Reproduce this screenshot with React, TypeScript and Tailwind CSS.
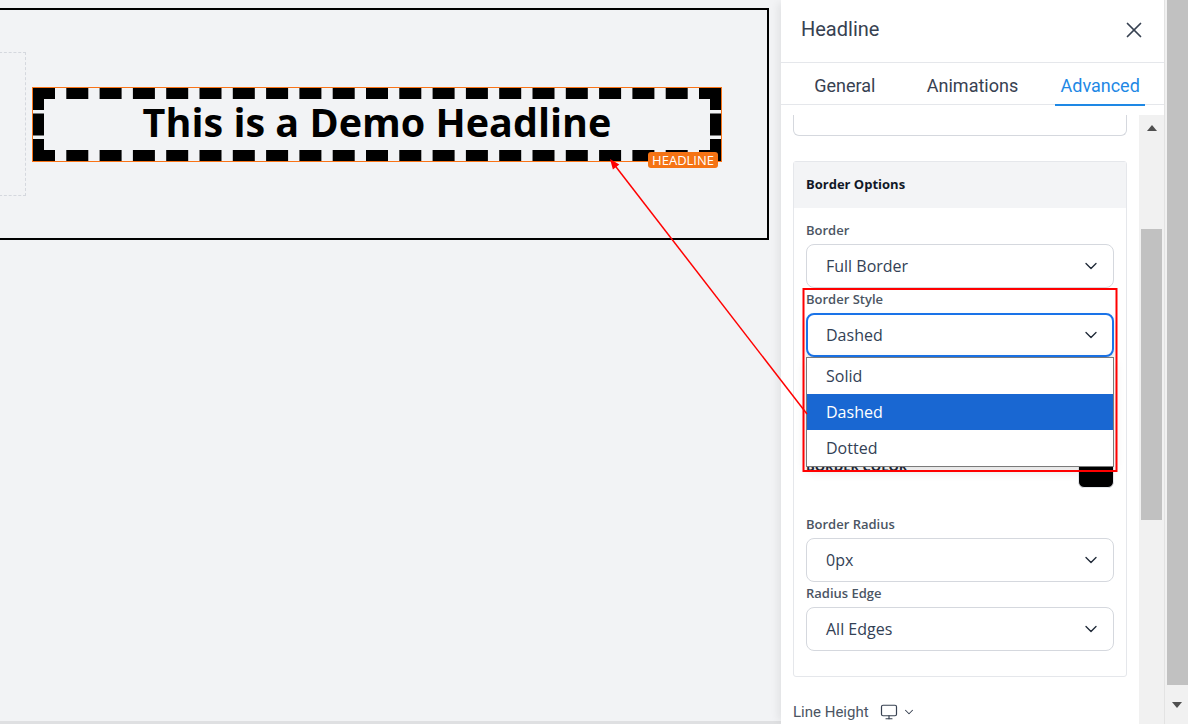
import React from 'react';
import { X, ChevronDown, Monitor } from 'lucide-react';

const Select: React.FC<{ value: string; focused?: boolean }> = ({ value, focused }) => (
  <div
    className={
      focused
        ? 'flex h-11 items-center justify-between rounded-lg border-2 border-[#1a73e8] bg-white pl-[18px] pr-[11px] text-[16px] text-[#334155] shadow-[0_4px_6px_rgba(0,0,0,0.12)]'
        : 'flex h-11 items-center justify-between rounded-lg border border-[#d5d8de] bg-white pl-[19px] pr-3 text-[16px] text-[#334155]'
    }
  >
    <span>{value}</span>
    <ChevronDown size={20} strokeWidth={1.6} className="text-[#1f2937]" />
  </div>
);

const Label: React.FC<{ children: React.ReactNode }> = ({ children }) => (
  <div className="mb-1 text-[13px] font-semibold leading-5 text-[#4b5563]">{children}</div>
);

const App: React.FC = () => {
  return (
    <div className="relative flex h-[724px] w-[1188px] overflow-hidden bg-white font-['Open_Sans',sans-serif]">
      {/* Canvas */}
      <main className="flex w-[781px] shrink-0 flex-col bg-[#f2f3f5]">
        <div className="pt-2">
          <div className="-ml-[2px] flex h-[232px] w-[771px] items-center border-2 border-black">
            <div className="-ml-[20px] h-[144px] w-[46px] shrink-0 border border-dashed border-[#d5d8de]"></div>
            <div className="relative ml-[6px] h-[75px] w-[690px] shrink-0 border border-[#f97316]">
              <div className="flex h-full items-center justify-center border-[11px] border-dashed border-black">
                <h1 className="mb-[3px] text-[39.5px] font-bold leading-none text-black">This is a Demo Headline</h1>
              </div>
              <span className="absolute bottom-[-7px] right-[3px] rounded-[3px] bg-[#f57314] px-[4px] text-[13px] leading-4 text-white">
                HEADLINE
              </span>
            </div>
          </div>
        </div>
        <div className="mt-auto h-[3px] bg-[#dfe0e2]"></div>
      </main>

      {/* Settings panel */}
      <aside className="relative z-10 flex w-[384px] shrink-0 flex-col border-r border-[#e3e3e3] bg-white shadow-[-6px_0_8px_-3px_rgba(0,0,0,0.07)]">
        <div className="flex h-[63px] items-center justify-between border-b border-[#e5e7eb] pb-[5px] pl-5 pr-[17px]">
          <span className="font-['Roboto',sans-serif] text-[20px] text-[#374151]">Headline</span>
          <X size={26} strokeWidth={1.6} className="mt-[2px] text-[#374151]" />
        </div>
        <div className="grid h-[42px] grid-cols-3 border-b border-[#e5e7eb] font-['Roboto',sans-serif] text-[18px]">
          <div className="flex items-center justify-center pt-[4px] text-[#374151]">General</div>
          <div className="flex items-center justify-center pt-[4px] text-[#374151]">Animations</div>
          <div className="flex items-center justify-center">
            <span className="relative flex h-full items-center px-[5px] pt-[4px] text-[#1e88e5]">
              Advanced
              <span className="absolute bottom-[-2px] left-0 right-0 h-[2px] bg-[#1e88e5]"></span>
            </span>
          </div>
        </div>

        <div className="flex min-h-0 flex-1 pt-[10px]">
          <div className="w-[358px] shrink-0 px-3">
            <div className="h-[21px] rounded-b-md border border-t-0 border-[#d5d8de]"></div>

            <div className="mt-[25px] rounded-[3px] border border-[#e5e7eb]">
              <div className="flex h-[46px] items-center bg-[#f3f4f6] px-3 text-[13px] font-bold text-[#111827]">
                Border Options
              </div>
              <div className="px-3 pb-[25px] pt-3">
                <Label>Border</Label>
                <Select value="Full Border" />

                <div className="relative mt-px">
                  <Label>Border Style</Label>
                  <Select value="Dashed" focused />
                  <div className="absolute left-0 right-0 top-full z-20 border border-[#7a7a7a] bg-white text-[16px] shadow-[0_4px_10px_rgba(0,0,0,0.12)]">
                    <div className="flex h-9 items-center pl-[19px] text-[#334155]">Solid</div>
                    <div className="flex h-9 items-center bg-[#1967d2] pl-[19px] text-white">Dashed</div>
                    <div className="flex h-9 items-center pl-[19px] text-[#334155]">Dotted</div>
                  </div>
                </div>

                {/* field hidden under the open list */}
                <div className="mt-px h-[68px]"></div>

                <div className="mt-[26px] flex h-9 justify-between">
                  <span className="mt-1 text-[13px] font-bold uppercase leading-5 text-[#1f2937]">Border Color</span>
                  <div className="h-9 w-9 rounded-md border border-[#e5e7eb] bg-black"></div>
                </div>

                <div className="mt-[26px]">
                  <Label>Border Radius</Label>
                  <Select value="0px" />
                </div>
                <div className="mt-px">
                  <Label>Radius Edge</Label>
                  <Select value="All Edges" />
                </div>
              </div>
            </div>

            <div className="mt-[25px] flex items-center font-['Roboto',sans-serif] text-[15px] leading-5 text-[#4b5563]">
              <span>Line Height</span>
              <Monitor size={18} strokeWidth={1.6} className="ml-[11px] text-[#374151]" />
              <ChevronDown size={14} strokeWidth={1.8} className="ml-[4px] text-[#374151]" />
            </div>
          </div>

          {/* inner scrollbar */}
          <div className="flex w-[25px] shrink-0 flex-col bg-[#f1f1f1]">
            <div className="flex h-[26px] items-center justify-center">
              <svg width="10" height="6" viewBox="0 0 10 6">
                <path d="M0 6 L5 0 L10 6 Z" fill="#505050" />
              </svg>
            </div>
            <div className="mx-[2px] mt-[88px] h-[291px] bg-[#c1c1c1]"></div>
          </div>
        </div>
      </aside>

      {/* page scrollbar */}
      <div className="flex w-[23px] shrink-0 flex-col bg-[#f1f1f1]">
        <div className="ml-[2px] h-[685px] bg-[#c1c1c1]"></div>
        <div className="flex flex-1 items-center justify-center">
          <svg width="10" height="6" viewBox="0 0 10 6">
            <path d="M0 0 L10 0 L5 6 Z" fill="#505050" />
          </svg>
        </div>
      </div>

      {/* annotation overlay */}
      <svg className="pointer-events-none absolute inset-0 z-30" width="1188" height="724" viewBox="0 0 1188 724">
        <rect x="803.5" y="289" width="313" height="182" fill="none" stroke="#ff0000" strokeWidth="2" />
        <line x1="807" y1="414" x2="613" y2="163" stroke="#ff0000" strokeWidth="1.5" />
        <path d="M610 159 L619.3 164.5 L612.9 169.4 Z" fill="#ff0000" />
      </svg>
    </div>
  );
};

export default App;
